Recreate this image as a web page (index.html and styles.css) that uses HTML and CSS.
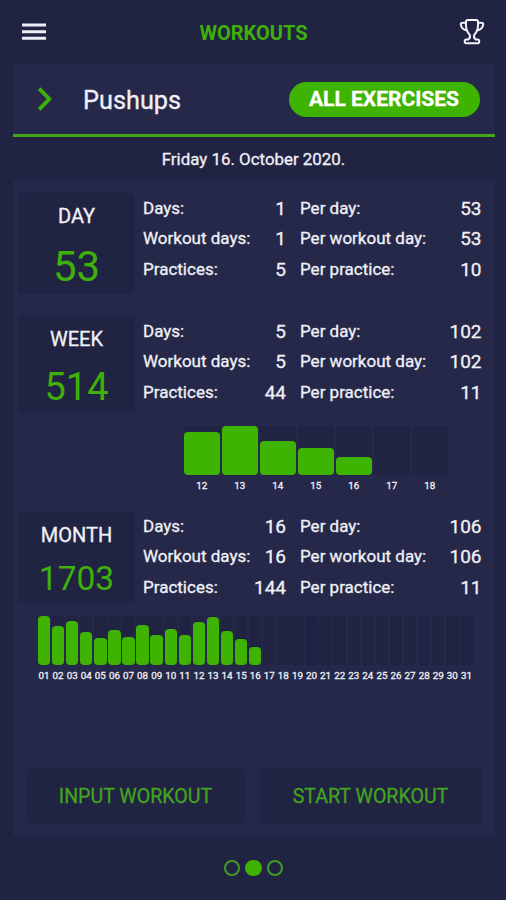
FILE: index.html
```html
<!DOCTYPE html>
<html lang="en">
<head>
    <meta charset="UTF-8">
    <meta name="viewport" content="width=device-width, initial-scale=1.0">
    <title>Workouts</title>
    <link rel="stylesheet" href="styles.css">
</head>
<body>
    <header class="topbar">
        <svg class="menu-icon" width="26" height="20" viewBox="0 0 26 20">
            <path d="M1 3h24M1 9.8h24M1 16.2h24" stroke="#eeeef6" stroke-width="3" fill="none"/>
        </svg>
        <h1>WORKOUTS</h1>
        <svg class="trophy-icon" width="26" height="28" viewBox="0 0 26 28" fill="none" stroke="#f2f2f8" stroke-width="2" stroke-linejoin="round">
            <path d="M7 4.200c0-1.400.5-2.200 1.700-2.200h8.600c1.200 0 1.700.8 1.700 2.200c.4 5-.4 9.400-3.600 12.400c-.8 1.600-.4 3.600 1.300 5h1.900c1 0 1.700.8 1.700 1.900c0 1-.6 1.700-1.600 1.700H7.300c-1 0-1.600-.7-1.600-1.700c0-1.100.7-1.900 1.700-1.900h1.900c1.700-1.400 2.100-3.400 1.300-5c-3.200-3-4-7.400-3.600-12.400z"/>
            <path d="M7 4.700H4.200c-1.700 0-2.600.6-2.400 1.900c.3 2.800 2.600 5 6.200 5.800M19 4.700h2.800c1.700 0 2.600.6 2.400 1.900c-.3 2.800-2.600 5-6.200 5.800"/>
        </svg>
    </header>

    <div class="exercise">
        <svg width="16" height="24" viewBox="0 0 16 24">
            <path d="M2.2 1.600L12.300 12L2.200 22.400" stroke="#3eb009" stroke-width="3.800" fill="none"/>
        </svg>
        <span class="exercise-name">Pushups</span>
        <button class="all-btn">ALL EXERCISES</button>
    </div>

    <div class="date">Friday 16. October 2020.</div>

    <main class="panel">
        <section class="period day">
            <div class="summary">
                <div class="total"><h2>DAY</h2><span>53</span></div>
                <div class="stats">
                    <label>Days:</label><b>1</b><label>Per day:</label><b>53</b>
                    <label>Workout days:</label><b>1</b><label>Per workout day:</label><b>53</b>
                    <label>Practices:</label><b>5</b><label>Per practice:</label><b>10</b>
                </div>
            </div>
        </section>

        <section class="period week">
            <div class="summary">
                <div class="total"><h2>WEEK</h2><span>514</span></div>
                <div class="stats">
                    <label>Days:</label><b>5</b><label>Per day:</label><b>102</b>
                    <label>Workout days:</label><b>5</b><label>Per workout day:</label><b>102</b>
                    <label>Practices:</label><b>44</b><label>Per practice:</label><b>11</b>
                </div>
            </div>
            <div class="chart" id="week-chart"></div>
        </section>

        <section class="period month">
            <div class="summary">
                <div class="total"><h2>MONTH</h2><span>1703</span></div>
                <div class="stats">
                    <label>Days:</label><b>16</b><label>Per day:</label><b>106</b>
                    <label>Workout days:</label><b>16</b><label>Per workout day:</label><b>106</b>
                    <label>Practices:</label><b>144</b><label>Per practice:</label><b>11</b>
                </div>
            </div>
            <div class="chart" id="month-chart"></div>
        </section>

        <div class="buttons">
            <button class="input-btn">INPUT WORKOUT</button>
            <button class="start-btn">START WORKOUT</button>
        </div>
    </main>

    <div class="pager">
        <i></i><i class="active"></i><i></i>
    </div>

    <script src="script.js"></script>
</body>
</html>
```
FILE: styles.css
```css
* {
    box-sizing: border-box;
}

body {
    margin: 0;
    height: 900px;
    padding: 0 11.5px 0 12.5px;
    background-color: #212342;
    color: #f0f0f6;
    font-family: Roboto, sans-serif;
    -webkit-text-stroke: 0.3px;
    overflow: hidden;
}

h1, h2 {
    margin: 0;
}

button {
    border: none;
    font-family: inherit;
    cursor: pointer;
    padding: 0;
    white-space: nowrap;
}

.topbar {
    display: flex;
    justify-content: space-between;
    height: 64px;
    padding: 0 9.5px 0 8.5px;
}

.menu-icon {
    margin-top: 22px;
}

.trophy-icon {
    margin-top: 17.5px;
}

.topbar h1 {
    margin-top: 21px;
    margin-left: 1px;
    font-size: 20px;
    line-height: 24px;
    font-weight: 700;
    color: #3eb009;
    -webkit-text-stroke: 0;
}

.exercise {
    display: flex;
    align-items: center;
    height: 73px;
    padding: 0 15px 0 24.5px;
    background-color: #252849;
    border-bottom: 3px solid #42a81c;
}

.exercise-name {
    margin: 3px 0 0 30px;
    font-size: 25.3px;
    line-height: 30px;
}

.all-btn {
    width: 191px;
    height: 35px;
    margin-left: auto;
    border-radius: 18px;
    background-color: #3eb302;
    color: #fff;
    font-size: 21px;
    font-weight: 700;
}

.date {
    height: 42px;
    padding-top: 12px;
    text-align: center;
    font-size: 16.9px;
    line-height: 21px;
}

.panel {
    display: flex;
    flex-direction: column;
    height: 657px;
    border-radius: 3px;
    background-color: #252849;
}

.period {
    padding: 14px 13px 0 5px;
    border-bottom: 1px solid #222544;
}

.day {
    height: 123px;
}

.week {
    height: 195px;
}

.month {
    height: 192px;
    border-bottom: none;
}

.summary {
    display: flex;
}

.total {
    width: 117px;
    height: 101px;
    padding: 10px 0 0 1px;
    border-radius: 4px;
    background-color: #212342;
    text-align: center;
}

.total h2 {
    font-size: 20px;
    line-height: 26px;
    font-weight: 400;
}

.total span {
    display: block;
    margin-top: 13px;
    font-size: 42px;
    line-height: 50px;
    color: #3eb009;
    -webkit-text-stroke: 0;
}

.week .total {
    height: 96px;
}

.week .total span {
    margin-top: 10px;
    font-size: 38px;
}

.month .total {
    height: 92px;
}

.month .total h2 {
    padding-top: 1px;
}

.month .total span {
    margin-top: 6px;
    font-size: 33.5px;
}

.stats {
    display: grid;
    grid-template-columns: 116px 27px 120px 1fr;
    grid-auto-rows: 30.5px;
    flex: 1;
    margin-left: 8.5px;
    align-items: center;
    height: 92px;
}

.stats label {
    margin-top: -1.5px;
    font-size: 17px;
    white-space: nowrap;
}

.stats label:nth-child(4n + 3) {
    padding-left: 14px;
}

.stats b {
    display: flex;
    justify-content: flex-end;
    font-size: 19px;
    font-weight: 400;
}

.chart {
    display: flex;
}

.chart .col {
    display: flex;
    flex-direction: column;
    align-items: center;
    flex: none;
}

.chart .track {
    display: flex;
    align-items: flex-end;
    height: 49px;
    background-color: #212342;
    border-radius: 3px;
}

.chart .bar {
    width: 100%;
    background-color: #3eb302;
    border-radius: 4px;
}

.chart .col span {
    font-size: 9.8px;
    line-height: 12px;
}

#week-chart {
    margin: 13.5px 0 0 165.3px;
}

#week-chart .col {
    width: 38px;
}

#week-chart .track {
    width: 36px;
    margin-bottom: 5.5px;
}

#month-chart {
    margin: 13px 0 0 19.5px;
}

#month-chart .col {
    width: 14.08px;
}

#month-chart .track {
    width: 12.4px;
    margin-bottom: 4.5px;
}

.buttons {
    display: flex;
    gap: 15px;
    margin: auto 13px 13px 14px;
}

.buttons button {
    height: 54px;
    border-radius: 4px;
    background-color: #212342;
    color: #41a41d;
    font-size: 19.6px;
}

.input-btn {
    width: 218px;
}

.start-btn {
    flex: 1;
}

.pager {
    display: flex;
    justify-content: center;
    gap: 5px;
    padding-top: 23.5px;
}

.pager i {
    width: 16.5px;
    height: 16.5px;
    border: 2px solid #3f9a26;
    border-radius: 50%;
}

.pager .active {
    background-color: #3eb302;
    border-color: #3eb302;
}
```
FILE: script.js
```javascript
// bar heights in px, days without a value stay empty
const week = [43, 49, 34, 27, 18];
const month = [49, 39, 44, 33, 27, 35, 28, 40, 30, 36, 30, 43, 48, 34, 26, 18];

function drawChart(id, first, last, values) {
    const chart = document.getElementById(id);
    for (let day = first; day <= last; day++) {
        const value = values[day - first];
        const bar = value ? `<div class="bar" style="height: ${value}px"></div>` : '';
        const label = String(day).padStart(2, '0');
        chart.innerHTML += `<div class="col"><div class="track">${bar}</div><span>${label}</span></div>`;
    }
}

drawChart('week-chart', 12, 18, week);
drawChart('month-chart', 1, 31, month);
```
